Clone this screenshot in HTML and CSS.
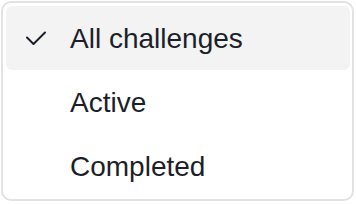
FILE: index.html
```html
<!DOCTYPE html>
<html lang="en">
<head>
  <meta charset="UTF-8" />
  <meta name="viewport" content="width=device-width, initial-scale=1.0"/>
  <title>Challenge filter</title>
  <link rel="stylesheet" href="styles.css">
</head>
<body>

  <!-- Filter dropdown -->
  <div class="menu" role="menu">
    <div class="menu-item selected" role="menuitemradio" aria-checked="true">
      <span class="check">
        <svg viewBox="0 0 20 14" width="20" height="14">
          <polyline points="1,6.5 7.5,13 19,1.5" fill="none" stroke="currentColor" stroke-width="2" stroke-linecap="round" stroke-linejoin="round"/>
        </svg>
      </span>
      <span class="label">All challenges</span>
    </div>
    <div class="menu-item" role="menuitemradio" aria-checked="false">
      <span class="check"></span>
      <span class="label">Active</span>
    </div>
    <div class="menu-item" role="menuitemradio" aria-checked="false">
      <span class="check"></span>
      <span class="label">Completed</span>
    </div>
  </div>

</body>
</html>
```

FILE: styles.css
```css
* {
  box-sizing: border-box;
  margin: 0;
  padding: 0;
}

body {
  background-color: white;
  color: #1c1f2a;
  font-family: 'Liberation Sans', Arial, sans-serif;
}

.menu {
  margin: 1px 2px 0 1px;
  height: 200px;
  border: 2px solid #e2e2e2;
  border-radius: 10px;
  padding: 3px 2px 1px 3px;
  background: white;
  display: flex;
  flex-direction: column;
}

.menu-item {
  height: 64px;
  display: flex;
  align-items: center;
  padding-left: 20px;
  border-radius: 6px;
  font-size: 28px;
  cursor: pointer;
}

.menu-item.selected {
  background-color: #f3f3f3;
}

.check {
  width: 20px;
  height: 14px;
  margin-right: 24px;
  display: flex;
}

.label {
  line-height: 1;
  padding-top: 2px;
}
```
